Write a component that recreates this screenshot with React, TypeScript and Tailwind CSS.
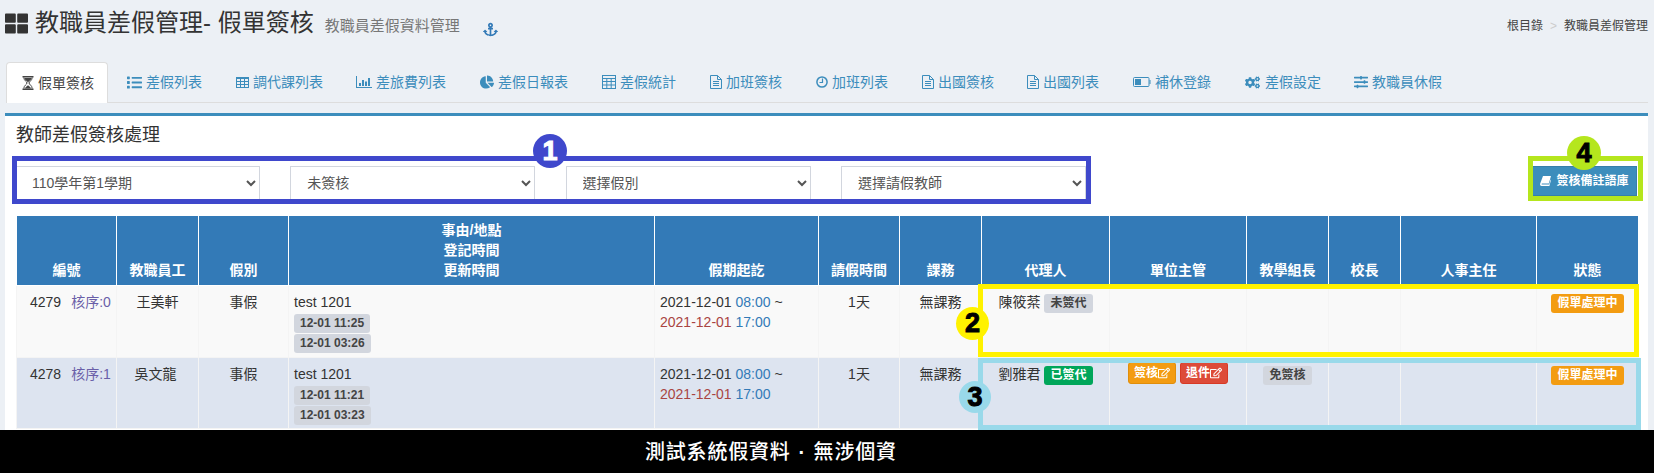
import React from 'react'
import { FaAnchor, FaChartPie, FaCogs, FaList, FaRegEdit, FaSlidersH, FaThLarge } from 'react-icons/fa'

const HourglassIcon = () => (
  <svg width="12" height="14" viewBox="0 0 12 14" fill="none">
    <path d="M0.5 0.75H11.5M0.5 13.25H11.5" stroke="currentColor" strokeWidth="1.5" />
    <path d="M1.8 1.5C1.8 4.6 5 5.5 5 7C5 8.5 1.8 9.4 1.8 12.5M10.2 1.5C10.2 4.6 7 5.5 7 7C7 8.5 10.2 9.4 10.2 12.5" stroke="currentColor" />
    <path d="M2.4 2H9.6C9.4 4.2 6.6 5.2 6 6.5C5.4 5.2 2.6 4.2 2.4 2ZM6 9.2C6.4 10 8.6 10.8 9.2 12.4H2.8C3.4 10.8 5.6 10 6 9.2Z" fill="currentColor" />
  </svg>
)

const TableIcon = () => (
  <svg width="13" height="11" viewBox="0 0 13 11" fill="none" stroke="currentColor">
    <rect x="0.5" y="0.5" width="12" height="10" />
    <path d="M0.5 1.5H12.5M0.5 4.5H12.5M0.5 7.5H12.5M4.5 1.5V10.5M8.5 1.5V10.5" />
  </svg>
)

const BarsIcon = () => (
  <svg width="16" height="12" viewBox="0 0 16 12" fill="currentColor">
    <path d="M0 0H1V11H16V12H0Z" />
    <rect x="3" y="7" width="2" height="3" />
    <rect x="6" y="4" width="2" height="6" />
    <rect x="9" y="5.5" width="2" height="4.5" />
    <rect x="12" y="2" width="2" height="8" />
  </svg>
)

const CalculatorIcon = () => (
  <svg width="14" height="14" viewBox="0 0 14 14" fill="none" stroke="currentColor">
    <rect x="0.5" y="0.5" width="13" height="13" />
    <path d="M0.5 3.5H13.5M0.5 6.5H13.5M0.5 10H13.5M4.8 3.5V13.5M9.2 3.5V13.5" />
  </svg>
)

const FileIcon = () => (
  <svg width="12" height="14" viewBox="0 0 12 14" fill="none" stroke="currentColor">
    <path d="M0.5 0.5H7.5L11.5 4.5V13.5H0.5Z" />
    <path d="M7.5 0.5V4.5H11.5M3 6.5H9M3 8.5H9M3 10.5H9" />
  </svg>
)

const ClockIcon = () => (
  <svg width="12" height="12" viewBox="0 0 12 12" fill="none" stroke="currentColor">
    <circle cx="6" cy="6" r="5.1" strokeWidth="1.5" />
    <path d="M6.5 2.5V6.5H3.5" strokeWidth="1.2" />
  </svg>
)

const BatteryIcon = () => (
  <svg width="18" height="10" viewBox="0 0 18 10" fill="none">
    <rect x="0.5" y="0.5" width="15.5" height="9" rx="1" stroke="currentColor" />
    <rect x="2" y="2" width="6" height="6" fill="currentColor" />
    <path d="M17 3V7" stroke="currentColor" />
  </svg>
)

const BookIcon = () => (
  <svg width="11" height="10" viewBox="0 0 11 10" fill="currentColor">
    <path d="M3 0H11L8.8 7.4H2.2C1.4 7.4 1.2 8.6 2 8.6H9.2L10.6 3.6L11 4L9.4 10H1.6C0.3 10 -0.2 8.8 0.2 7.4Z" />
  </svg>
)

const tabs = [
  { label: '假單簽核', icon: <HourglassIcon />, box: 'w-[13px]' },
  { label: '差假列表', icon: <FaList className="text-[15px]" />, box: 'w-[15px]' },
  { label: '調代課列表', icon: <TableIcon />, box: 'w-[14px]' },
  { label: '差旅費列表', icon: <BarsIcon />, box: 'w-[16px]' },
  { label: '差假日報表', icon: <FaChartPie className="text-[14px]" />, box: 'w-[15px]' },
  { label: '差假統計', icon: <CalculatorIcon />, box: 'w-[15px]' },
  { label: '加班簽核', icon: <FileIcon />, box: 'w-[13px]' },
  { label: '加班列表', icon: <ClockIcon />, box: 'w-[13px]' },
  { label: '出國簽核', icon: <FileIcon />, box: 'w-[13px]' },
  { label: '出國列表', icon: <FileIcon />, box: 'w-[12px]' },
  { label: '補休登錄', icon: <BatteryIcon />, box: 'w-[19px]' },
  { label: '差假設定', icon: <FaCogs className="text-[15px]" />, box: 'w-[17px]' },
  { label: '教職員休假', icon: <FaSlidersH className="text-[14px]" />, box: 'w-[14px]' },
]

const columns = [
  { title: '編號', width: 'w-[100px]' },
  { title: '教職員工', width: 'w-[82px]' },
  { title: '假別', width: 'w-[90px]' },
  { title: '', width: 'w-[366px]' },
  { title: '假期起訖', width: 'w-[164px]' },
  { title: '請假時間', width: 'w-[81px]' },
  { title: '課務', width: 'w-[82px]' },
  { title: '代理人', width: 'w-[128px]' },
  { title: '單位主管', width: 'w-[137px]' },
  { title: '教學組長', width: 'w-[82px]' },
  { title: '校長', width: 'w-[72px]' },
  { title: '人事主任', width: 'w-[136px]' },
  { title: '狀態', width: 'w-[102px]' },
]

const selects = ['110學年第1學期', '未簽核', '選擇假別', '選擇請假教師']

const Label = ({ className, children }: { className: string; children: React.ReactNode }) => (
  <span className={`inline-block h-[19px] rounded-[3px] px-[6px] text-[12px] leading-[19px] font-bold ${className}`}>
    {children}
  </span>
)

const Frame = ({ className }: { className: string }) => (
  <div className={`absolute border-[5px] pointer-events-none ${className}`} />
)

const Badge = ({ className, children }: { className: string; children: React.ReactNode }) => (
  <div className={`absolute flex items-center justify-center rounded-full text-[27px] font-bold leading-none [-webkit-text-stroke:1px_currentColor] ${className}`}>
    {children}
  </div>
)

const Row = ({ id, seq, name, bg, border, height, times, agent, agentLabel, children }: {
  id: string
  seq: string
  name: React.ReactNode
  bg: string
  border: string
  height: string
  times: string[]
  agent: string
  agentLabel: React.ReactNode
  children: React.ReactNode
}) => {
  const td = `border ${border} align-top pt-[6px] text-center`
  return (
    <tr className={`${bg} ${height}`}>
      <td className={`border ${border} align-top pt-[6px] pl-[13px]`}>
        <span className="mr-[10px]">{id}</span>
        <span className="text-[#6a5fa8]">{seq}</span>
      </td>
      <td className={td}>{name}</td>
      <td className={td}>事假</td>
      <td className={`border ${border} align-top pt-[6px] pl-[5px]`}>
        <div>test 1201</div>
        <div className="mt-[2px] flex flex-col items-start gap-px">
          {times.map((t) => (
            <Label key={t} className="bg-[#d2d6de] text-[#444]">{t}</Label>
          ))}
        </div>
      </td>
      <td className={`border ${border} align-top pt-[6px] pl-[5px]`}>
        <div>2021-12-01 <span className="text-[#337ab7]">08:00</span> ~</div>
        <div><span className="text-[#a94442]">2021-12-01</span> <span className="text-[#337ab7]">17:00</span></div>
      </td>
      <td className={td}>1天</td>
      <td className={td}>無課務</td>
      <td className={td}>
        <span className="mr-[4px]">{agent}</span>
        {agentLabel}
      </td>
      {children}
    </tr>
  )
}

const App = () => {
  return (
    <div lang="zh-TW" className="relative h-[473px] w-[1654px] overflow-hidden bg-[#ecf0f5] font-['Liberation_Sans','Noto_Sans_CJK_TC',sans-serif] text-[14px] leading-[20px] text-[#333]">
      <div className="h-[430px] overflow-hidden">
        <div className="flex h-[62px] justify-between pl-[5px] pr-[6px]">
          <div className="flex h-[46px] items-center">
            <FaThLarge className="mr-[7px] text-[23px] text-[#333]" />
            <h1 className="text-[24px] leading-[26px] text-[#333]">教職員差假管理- 假單簽核</h1>
            <span className="ml-[11px] mt-[6px] text-[15px] text-[#777]">教職員差假資料管理</span>
            <FaAnchor className="ml-[23px] mt-[12px] text-[15px] text-[#337ab7]" />
          </div>
          <div className="mt-[16px] text-[12px] text-[#444]">
            根目錄<span className="mx-[7px] text-[#ccc]">&gt;</span>教職員差假管理
          </div>
        </div>

        <ul className="ml-[6px] mr-[6px] flex h-[41px] border-b border-[#ddd]">
          {tabs.map((tab, i) => (
            <li
              key={tab.label}
              className={
                i === 0
                  ? 'mr-[4px] flex h-[41px] items-center gap-[4px] rounded-t-[4px] border border-b-0 border-[#ddd] bg-white pl-[14px] pr-[13px] text-[#444]'
                  : 'mr-[3px] flex h-[40px] items-center gap-[4px] px-[15px] text-[#3c8dbc]'
              }
            >
              <span className={`flex justify-center ${tab.box}`}>{tab.icon}</span>
              <span>{tab.label}</span>
            </li>
          ))}
        </ul>

        <div className="ml-[5px] mr-[6px] mt-[10px] h-[320px] border-t-[3px] border-[#3c8dbc] bg-white pl-[10px] pr-[11px]">
          <h3 className="pl-px pt-[7px] text-[18px] leading-[24px] text-[#333]">教師差假簽核處理</h3>

          <div className="mt-[19px] flex h-[49px] items-start justify-between">
            <div className="flex gap-[30.3px]">
              {selects.map((s) => (
                <select
                  key={s}
                  defaultValue={s}
                  className="h-[34px] w-[245px] border border-[#d2d6de] bg-white pl-[12px] pr-[4px] text-[14px] text-[#555]"
                >
                  <option>{s}</option>
                </select>
              ))}
            </div>
            <button className="flex h-[30px] w-[105px] items-center justify-center gap-[5px] border border-[#367fa9] bg-[#3c8dbc] text-[12px] font-bold text-white">
              <BookIcon />
              簽核備註語庫
            </button>
          </div>

          <table className="ml-px w-[1622px] table-fixed border-collapse">
            <colgroup>
              {columns.map((c) => (
                <col key={c.title + c.width} className={c.width} />
              ))}
            </colgroup>
            <thead>
              <tr className="bg-[#337ab7] text-white">
                {columns.map((c, i) => (
                  <th key={c.title + c.width} className="h-[70px] border border-white pb-[5px] text-center align-bottom font-bold">
                    {i === 3 ? (
                      <>
                        <div>事由/地點</div>
                        <div>登記時間</div>
                        <div>更新時間</div>
                      </>
                    ) : (
                      c.title
                    )}
                  </th>
                ))}
              </tr>
            </thead>
            <tbody>
              <Row
                id="4279"
                seq="核序:0"
                name="王美軒"
                bg="bg-[#f9f9f9]"
                border="border-[#f4f4f4]"
                height="h-[72px]"
                times={['12-01 11:25', '12-01 03:26']}
                agent="陳筱棻"
                agentLabel={<Label className="bg-[#d2d6de] text-[#444]">未簽代</Label>}
              >
                <td className="border border-[#f4f4f4]" />
                <td className="border border-[#f4f4f4]" />
                <td className="border border-[#f4f4f4]" />
                <td className="border border-[#f4f4f4]" />
                <td className="border border-[#f4f4f4] pt-[6px] text-center align-top">
                  <Label className="bg-[#f39c12] text-white">假單處理中</Label>
                </td>
              </Row>
              <Row
                id="4278"
                seq="核序:1"
                name={<span className="mr-[4px]">吳文龍</span>}
                bg="bg-[#dde4f0]"
                border="border-[#f4f4f4]"
                height="h-[71px]"
                times={['12-01 11:21', '12-01 03:23']}
                agent="劉雅君"
                agentLabel={<Label className="bg-[#00a65a] text-white">已簽代</Label>}
              >
                <td className="border border-[#f4f4f4] pt-[4px] text-center align-top">
                  <div className="flex justify-center gap-[4px]">
                    <span className="flex h-[22px] w-[48px] items-center justify-center rounded-[3px] border border-[#e08e0b] bg-[#f39c12] text-[12px] font-bold text-white">
                      簽核<FaRegEdit className="text-[12px]" />
                    </span>
                    <span className="flex h-[22px] w-[48px] items-center justify-center rounded-[3px] border border-[#d73925] bg-[#dd4b39] text-[12px] font-bold text-white">
                      退件<FaRegEdit className="text-[12px]" />
                    </span>
                  </div>
                </td>
                <td className="border border-[#f4f4f4] pt-[6px] text-center align-top">
                  <Label className="bg-[#d2d6de] text-[#444]">免簽核</Label>
                </td>
                <td className="border border-[#f4f4f4]" />
                <td className="border border-[#f4f4f4]" />
                <td className="border border-[#f4f4f4] pt-[6px] text-center align-top">
                  <Label className="bg-[#f39c12] text-white">假單處理中</Label>
                </td>
              </Row>
            </tbody>
          </table>
        </div>
      </div>

      <div className="flex h-[43px] items-center bg-black pl-[645px] text-[20px] font-medium tracking-[0.8px] text-white">
        測試系統假資料<span className="inline-block w-[23px] text-center font-bold">·</span>無涉個資
      </div>

      {/* annotations drawn over the screenshot */}
      <Frame className="left-[12px] top-[156px] h-[48px] w-[1079px] border-[#3f48cc]" />
      <Frame className="left-[978px] top-[284px] h-[73px] w-[661px] border-[#fff200]" />
      <Frame className="left-[978px] top-[358px] h-[72px] w-[663px] border-[#99d9ea]" />
      <Frame className="left-[1528px] top-[156px] h-[45px] w-[115px] border-[#b5e61d]" />
      <Badge className="left-[533px] top-[134px] h-[34px] w-[34px] bg-[#3f48cc] text-white">1</Badge>
      <Badge className="left-[956px] top-[307px] h-[33px] w-[33px] bg-[#fff200] text-black">2</Badge>
      <Badge className="left-[959px] top-[381px] h-[32px] w-[32px] bg-[#99d9ea] text-black">3</Badge>
      <Badge className="left-[1567px] top-[136px] h-[34px] w-[34px] bg-[#b5e61d] text-black">4</Badge>
    </div>
  )
}

export default App
